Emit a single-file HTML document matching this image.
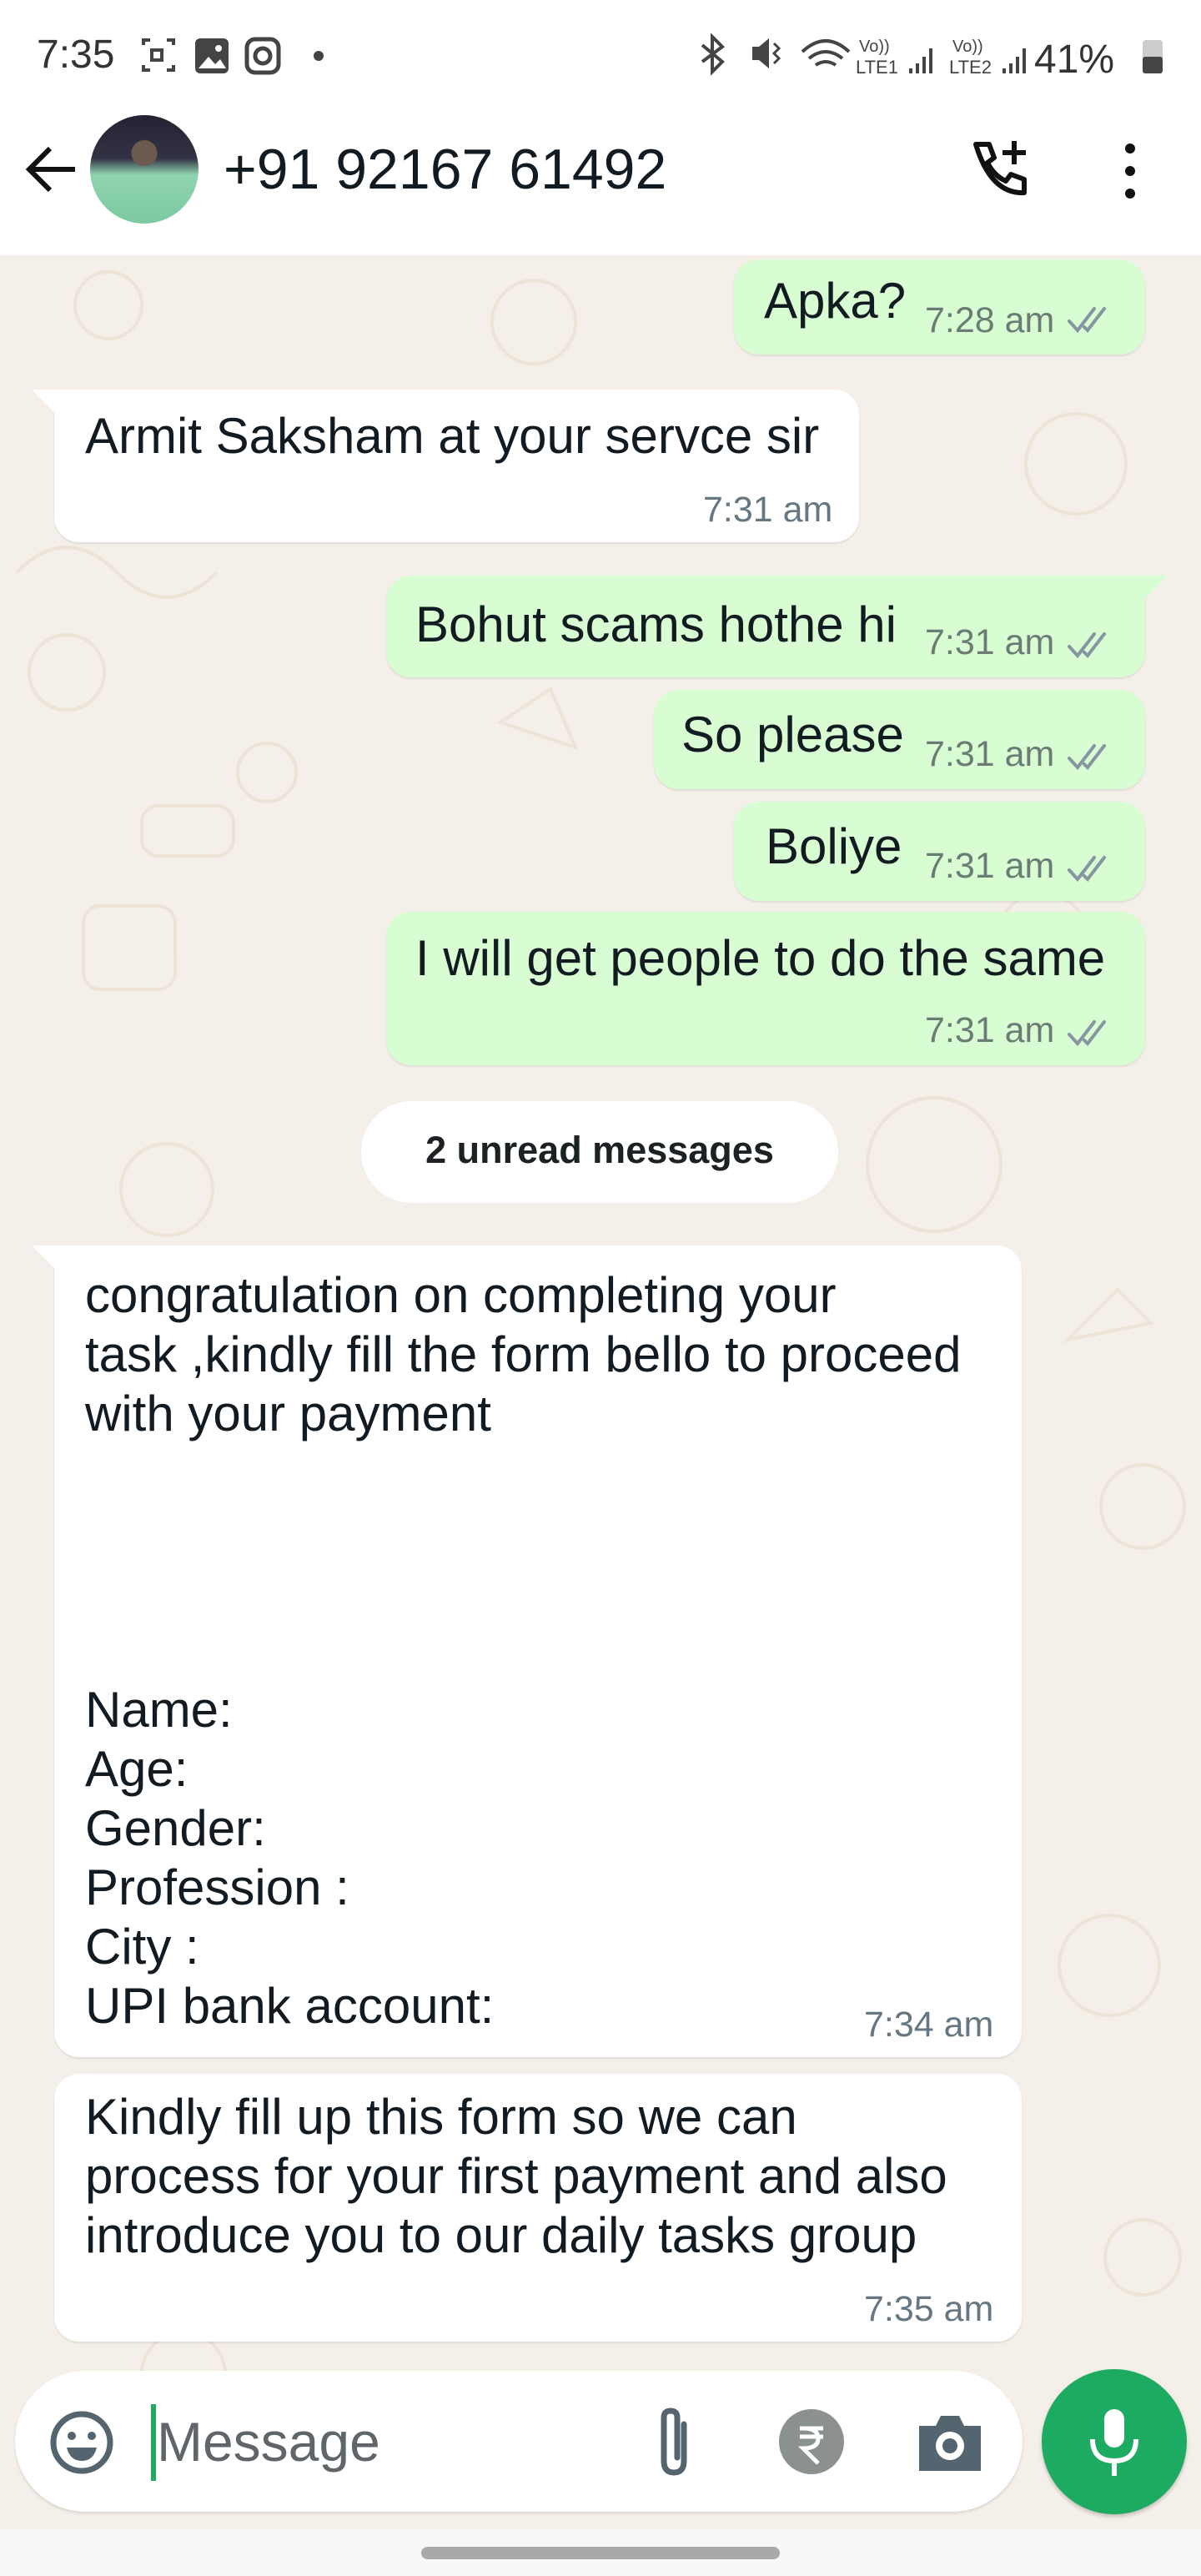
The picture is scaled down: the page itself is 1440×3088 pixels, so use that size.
<!DOCTYPE html>
<html><head><meta charset="utf-8"><style>
*{margin:0;padding:0;box-sizing:border-box}
body{width:1440px;height:3088px;position:relative;overflow:hidden;font-family:"Liberation Sans",sans-serif;background:#f4efe8;color:#111b21}
.a{position:absolute;white-space:nowrap}
.top{position:absolute;left:0;top:0;width:1440px;height:306px;background:#fff}
.b{position:absolute;border-radius:30px;box-shadow:0 2px 2px rgba(0,0,0,.08)}
.g{background:#d9fdd3}.w{background:#fff}
.t{font-size:60px;line-height:71px}
.tm{font-size:43px;line-height:50px;color:#6b7c74}
.tw{color:#667781}
</style></head><body>
<svg class="a" style="left:0;top:306px" width="1440" height="2726">
<g fill="none" stroke="#ebe0d2" stroke-width="4" opacity=".8">
<circle cx="130" cy="60" r="40"/><circle cx="640" cy="80" r="50"/><circle cx="1290" cy="250" r="60"/>
<circle cx="80" cy="500" r="45"/><circle cx="320" cy="620" r="35"/><circle cx="1250" cy="820" r="55"/>
<circle cx="1120" cy="1090" r="80"/><circle cx="200" cy="1120" r="55"/><circle cx="1370" cy="1500" r="50"/>
<circle cx="1330" cy="2050" r="60"/><circle cx="1370" cy="2400" r="45"/><circle cx="220" cy="2540" r="50"/>
<path d="M20 380 q60 -60 120 0 t120 0"/><path d="M600 560 l60 -40 l30 70z"/><path d="M1280 1300 l60 -60 l40 40z"/>
<rect x="170" y="660" width="110" height="60" rx="20"/><rect x="100" y="780" width="110" height="100" rx="20"/>
</g></svg>
<div class="top"></div>
<div class="a" style="left:44px;top:38px;font-size:48px;line-height:56px;color:#333">7:35</div>
<svg class="a" style="left:168px;top:44px" width="230" height="46">
<g fill="none" stroke="#444" stroke-width="4"><path d="M4 10V4h8M32 4h8v6M4 34v6h8M32 40h8v-6"/><rect x="14" y="16" width="12" height="12"/></g>
<rect x="66" y="2" width="40" height="42" rx="6" fill="#444"/><path d="M70 38l12-14 8 9 6-6 7 11z" fill="#fff"/><circle cx="94" cy="14" r="4" fill="#fff"/>
<rect x="128" y="3" width="38" height="40" rx="10" fill="none" stroke="#444" stroke-width="5"/><circle cx="147" cy="23" r="9" fill="none" stroke="#444" stroke-width="5"/>
<circle cx="214" cy="23" r="6" fill="#444"/></svg>
<svg class="a" style="left:840px;top:40px" width="560" height="52">
<g fill="none" stroke="#444" stroke-width="4"><path d="M2 14l24 20-12 12V4l12 12-24 18"/></g>
<path d="M62 16h8l12-10v36l-12-10h-8z" fill="#444"/><path d="M88 12l6 6-6 6 6 6-6 6" stroke="#444" stroke-width="3" fill="none"/>
<path d="M122 22q28-26 56 0M130 30q20-16 40 0M138 38q12-8 24 0" stroke="#444" stroke-width="4" fill="none"/>
<text x="190" y="22" font-size="20" font-family="Liberation Sans" fill="#444">Vo))</text><text x="186" y="48" font-size="22" font-family="Liberation Sans" fill="#444">LTE1</text>
<path d="M252 48v-6M260 48v-12M268 48v-20M276 48v-30" stroke="#444" stroke-width="4"/>
<text x="302" y="22" font-size="20" font-family="Liberation Sans" fill="#444">Vo))</text><text x="298" y="48" font-size="22" font-family="Liberation Sans" fill="#444">LTE2</text>
<path d="M364 48v-6M372 48v-12M380 48v-20M388 48v-30" stroke="#444" stroke-width="4"/>
<text x="400" y="47" font-size="48" font-family="Liberation Sans" fill="#333">41%</text>
<rect x="530" y="8" width="24" height="40" rx="4" fill="#ccc"/><rect x="530" y="28" width="24" height="20" rx="3" fill="#444"/></svg>
<svg class="a" style="left:28px;top:170px" width="66" height="66"><path d="M62 33H8M32 8L7 33l25 25" fill="none" stroke="#111" stroke-width="6"/></svg>
<div class="a" style="left:108px;top:138px;width:130px;height:130px;border-radius:50%;background:radial-gradient(circle at 50% 35%,#6b5a4e 0 14%,transparent 15%),linear-gradient(#223 0,#334 40%,#8fd4b0 55%,#7cc9a0 100%)"></div>
<div class="a" style="left:268px;top:164px;font-size:68px;line-height:78px;color:#111b21">+91 92167 61492</div>
<svg class="a" style="left:1160px;top:165px" width="80" height="80"><path d="M10 8h16l6 16-8 6q8 16 22 22l6-8 16 6v16q-40 2-58-58z" fill="none" stroke="#111" stroke-width="6" stroke-linejoin="round"/><path d="M56 4v28M42 18h28" stroke="#111" stroke-width="6"/></svg>
<svg class="a" style="left:1340px;top:170px" width="30" height="70"><circle cx="15" cy="8" r="6" fill="#111"/><circle cx="15" cy="35" r="6" fill="#111"/><circle cx="15" cy="62" r="6" fill="#111"/></svg>

<div class="b g" style="left:880px;top:311px;width:493px;height:114px"></div>
<div class="a t" style="left:916px;top:325px">Apka?</div>
<div class="a tm" style="left:1109px;top:359px">7:28 am</div>

<div class="b w" style="left:65px;top:467px;width:965px;height:183px;border-top-left-radius:0"></div>
<svg class="a" style="left:38px;top:467px" width="30" height="30"><path d="M0 0h30v30z" fill="#fff"/></svg>
<div class="a t" style="left:102px;top:487px">Armit Saksham at your servce sir</div>
<div class="a tm tw" style="left:843px;top:586px">7:31 am</div>

<div class="b g" style="left:463px;top:690px;width:910px;height:122px;border-top-right-radius:0"></div>
<svg class="a" style="left:1370px;top:690px" width="30" height="30"><path d="M0 0h30L0 30z" fill="#d9fdd3"/></svg>
<div class="a t" style="left:498px;top:713px">Bohut scams hothe hi</div>
<div class="a tm" style="left:1109px;top:745px">7:31 am</div>

<div class="b g" style="left:784px;top:827px;width:589px;height:119px"></div>
<div class="a t" style="left:817px;top:845px">So please</div>
<div class="a tm" style="left:1109px;top:879px">7:31 am</div>

<div class="b g" style="left:880px;top:961px;width:493px;height:119px"></div>
<div class="a t" style="left:918px;top:979px">Boliye</div>
<div class="a tm" style="left:1109px;top:1013px">7:31 am</div>

<div class="b g" style="left:463px;top:1093px;width:910px;height:184px"></div>
<div class="a t" style="left:498px;top:1113px">I will get people to do the same</div>
<div class="a tm" style="left:1109px;top:1210px">7:31 am</div>

<svg class="a" style="left:0;top:0" width="1440" height="1300">
<g fill="none" stroke="#8696a0" stroke-width="4" stroke-linecap="round">
<path d="M1282 385l10 11 20-26M1300 392l4 4 20-26"/>
<path d="M1282 775l10 11 20-26M1300 782l4 4 20-26"/>
<path d="M1282 909l10 11 20-26M1300 916l4 4 20-26"/>
<path d="M1282 1043l10 11 20-26M1300 1050l4 4 20-26"/>
<path d="M1282 1240l10 11 20-26M1300 1247l4 4 20-26"/>
</g></svg>

<div class="b w" style="left:433px;top:1320px;width:572px;height:122px;border-radius:61px;box-shadow:none"></div>
<div class="a" style="left:433px;top:1354px;width:572px;text-align:center;font-size:45px;line-height:50px;font-weight:bold;color:#1c2124">2 unread messages</div>

<div class="b w" style="left:65px;top:1493px;width:1160px;height:973px;border-top-left-radius:0"></div>
<svg class="a" style="left:38px;top:1493px" width="30" height="30"><path d="M0 0h30v30z" fill="#fff"/></svg>
<div class="a t" style="left:102px;top:1517px">congratulation on completing your<br>task ,kindly fill the form bello to proceed<br>with your payment<br><br><br><br><br>Name:<br>Age:<br>Gender:<br>Profession :<br>City :<br>UPI bank account:</div>
<div class="a tm tw" style="left:1036px;top:2402px">7:34 am</div>

<div class="b w" style="left:65px;top:2486px;width:1160px;height:321px"></div>
<div class="a t" style="left:102px;top:2502px">Kindly fill up this form so we can<br>process for your first payment and also<br>introduce you to our daily tasks group</div>
<div class="a tm tw" style="left:1036px;top:2743px">7:35 am</div>

<div class="a" style="left:18px;top:2842px;width:1208px;height:169px;border-radius:85px;background:#fff;box-shadow:0 2px 3px rgba(0,0,0,.12)"></div>
<svg class="a" style="left:58px;top:2888px" width="80" height="80"><circle cx="40" cy="40" r="34" fill="none" stroke="#54656f" stroke-width="7"/><circle cx="28" cy="32" r="5" fill="#54656f"/><circle cx="52" cy="32" r="5" fill="#54656f"/><path d="M22 46h36q-4 16-18 16t-18-16z" fill="#54656f"/></svg>
<div class="a" style="left:181px;top:2882px;width:6px;height:92px;background:#1daa61"></div>
<div class="a" style="left:188px;top:2889px;font-size:66px;line-height:76px;color:#5f666a">Message</div>
<svg class="a" style="left:780px;top:2886px" width="56" height="84"><path d="M40 20v44q0 14-12 14t-12-14V12q0-8 8-8t8 8v48" fill="none" stroke="#54656f" stroke-width="7" stroke-linecap="round"/></svg>
<svg class="a" style="left:933px;top:2887px" width="80" height="80"><circle cx="40" cy="40" r="39" fill="#8b9191"/><path d="M26 24h28M26 34h28M30 24q18 0 18 12t-18 12l18 18" fill="none" stroke="#fff" stroke-width="5"/></svg>
<svg class="a" style="left:1098px;top:2892px" width="82" height="72"><path d="M4 16h20l6-12h22l6 12h20v54H4z" fill="#54656f"/><circle cx="41" cy="40" r="17" fill="#fff"/><circle cx="41" cy="40" r="9" fill="#54656f"/></svg>
<div class="a" style="left:1249px;top:2840px;width:174px;height:174px;border-radius:50%;background:#1daa61;box-shadow:0 3px 5px rgba(0,0,0,.2)"></div>
<svg class="a" style="left:1296px;top:2886px" width="80" height="84"><rect x="28" y="2" width="24" height="46" rx="12" fill="#fff"/><path d="M14 38q0 26 26 26t26-26M40 64v18" fill="none" stroke="#fff" stroke-width="6"/></svg>
<div class="a" style="left:0;top:3032px;width:1440px;height:56px;background:#f6f7f9"></div>
<div class="a" style="left:505px;top:3053px;width:430px;height:15px;border-radius:8px;background:#a8a9ab"></div>
</body></html>
